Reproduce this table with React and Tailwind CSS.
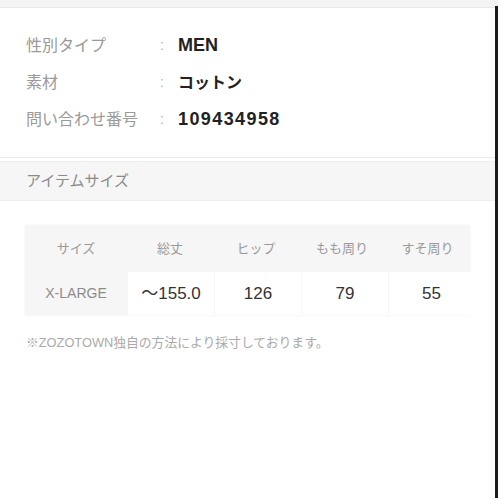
import React from 'react';

const info = [
  { label: '性別タイプ', value: 'MEN', cls: 'text-[18px]' },
  { label: '素材', value: 'コットン', cls: 'text-[16px]' },
  { label: '問い合わせ番号', value: '109434958', cls: 'text-[18px] tracking-[1.4px]' },
];

const heads = ['サイズ', '総丈', 'ヒップ', 'もも周り', 'すそ周り'];
const row = ['X-LARGE', '～155.0', '126', '79', '55'];

function App() {
  return (
    <div
      className="relative w-[498px] h-[498px] overflow-hidden bg-white"
      style={{ fontFamily: '"Liberation Sans", "Noto Sans CJK JP", sans-serif' }}
    >
      <div className="h-[8px] bg-[#f4f4f4] border-b border-[#e8e8e8]" />
      <div className="absolute right-0 top-[6px] bottom-0 w-[3px] bg-[#1c1c1c]" />

      {/* Item info */}
      <div className="pt-[26px] pb-[26px] pl-[26px] flex flex-col gap-[14px]">
        {info.map((it) => (
          <div key={it.label} className="flex items-center h-[23px]">
            <span className="w-[134px] text-[16px] text-[#9a9a9a]">{it.label}</span>
            <span className="w-[18px] text-[14px] text-[#b5b5b5]">:</span>
            <span className={`font-semibold text-[#222] ${it.cls}`}>{it.value}</span>
          </div>
        ))}
      </div>

      {/* Section header */}
      <div className="border-t border-[#ececec]">
        <div className="mt-[3px] h-[40px] bg-[#f6f6f6] border-t border-[#eeeeee] border-b border-[#ebebeb] pl-[26px] flex items-center text-[15px] text-[#8a8a8a]">
          アイテムサイズ
        </div>
      </div>

      {/* Size table */}
      <div className="mt-[24px] ml-[25px] w-[445px] bg-[#f6f6f6] shadow-[0_0_3px_rgba(0,0,0,0.06)]">
        <div className="grid grid-cols-[102px_86px_86px_86px_85px] h-[47px] items-center text-[13px] text-[#9a9a9a] text-center">
          {heads.map((h) => (
            <div key={h}>{h}</div>
          ))}
        </div>
        <div className="grid grid-cols-[102px_86px_86px_86px_85px] h-[43px] gap-[1px] text-center">
          {row.map((v, i) => (
            <div
              key={i}
              className={
                i === 0
                  ? 'flex items-center justify-center text-[14px] text-[#8c8c8c] bg-[#f6f6f6]'
                  : 'flex items-center justify-center text-[17px] text-[#333] bg-white'
              }
            >
              {v}
            </div>
          ))}
        </div>
      </div>

      <p className="mt-[18px] pl-[26px] text-[12.8px] text-[#aaaaaa]">
        ※ZOZOTOWN独自の方法により採寸しております。
      </p>
    </div>
  );
}

export default App;
